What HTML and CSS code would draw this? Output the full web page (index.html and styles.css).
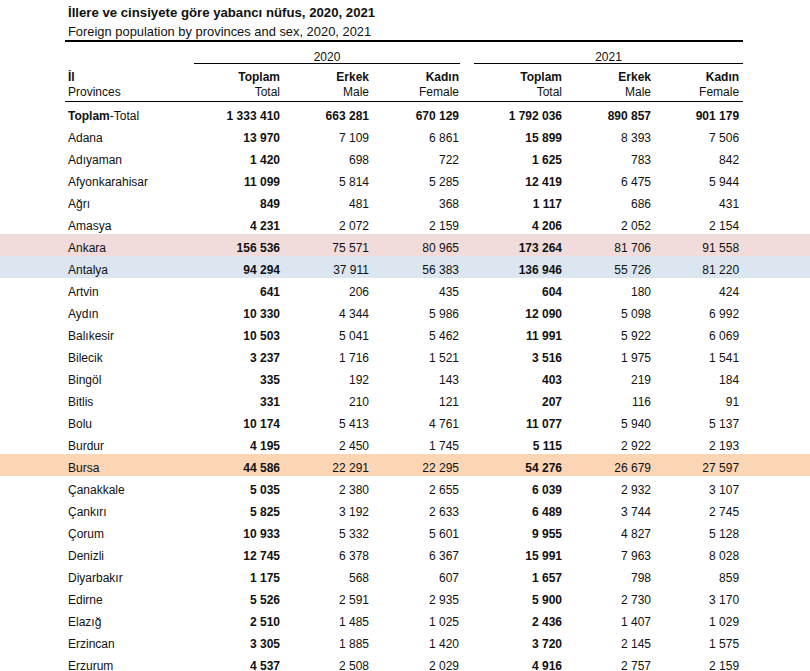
FILE: index.html
```html
<!DOCTYPE html>
<html lang="tr">
<head>
<meta charset="utf-8">
<title>İllere ve cinsiyete göre yabancı nüfus, 2020, 2021</title>
<link rel="stylesheet" href="styles.css">
</head>
<body>
<header class="caption">
  <h1 class="title">İllere ve cinsiyete göre yabancı nüfus, 2020, 2021</h1>
  <p class="subtitle">Foreign population by provinces and sex, 2020, 2021</p>
</header>
<table class="stats">
  <colgroup>
    <col class="c-pad-l"><col class="c-name"><col class="c-1"><col class="c-2"><col class="c-3"><col class="c-gap"><col class="c-4"><col class="c-5"><col class="c-6"><col class="c-pad-r">
  </colgroup>
  <thead>
    <tr class="year-row">
      <th class="pad"></th>
      <th class="ruled"></th>
      <th class="ruled year" colspan="3">2020</th>
      <th class="ruled"></th>
      <th class="ruled year" colspan="3">2021</th>
      <th class="pad"></th>
    </tr>
    <tr class="head-row">
      <th class="pad"></th>
      <th class="name"><b>İl</b><br>Provinces</th>
      <th class="num"><b>Toplam</b><br>Total</th>
      <th class="num"><b>Erkek</b><br>Male</th>
      <th class="num c3"><b>Kadın</b><br>Female</th>
      <th></th>
      <th class="num"><b>Toplam</b><br>Total</th>
      <th class="num"><b>Erkek</b><br>Male</th>
      <th class="num c6"><b>Kadın</b><br>Female</th>
      <th class="pad"></th>
    </tr>
  </thead>
  <tbody>
    <tr class="total">
      <td class="pad"></td><td class="name"><b>Toplam</b>-Total</td>
      <td class="num">1 333 410</td><td class="num">663 281</td><td class="num c3">670 129</td><td></td>
      <td class="num">1 792 036</td><td class="num">890 857</td><td class="num c6">901 179</td><td class="pad"></td>
    </tr>
    <tr><td class="pad"></td><td class="name">Adana</td><td class="num b">13 970</td><td class="num">7 109</td><td class="num c3">6 861</td><td></td><td class="num b">15 899</td><td class="num">8 393</td><td class="num c6">7 506</td><td class="pad"></td></tr>
    <tr><td class="pad"></td><td class="name">Adıyaman</td><td class="num b">1 420</td><td class="num">698</td><td class="num c3">722</td><td></td><td class="num b">1 625</td><td class="num">783</td><td class="num c6">842</td><td class="pad"></td></tr>
    <tr><td class="pad"></td><td class="name">Afyonkarahisar</td><td class="num b">11 099</td><td class="num">5 814</td><td class="num c3">5 285</td><td></td><td class="num b">12 419</td><td class="num">6 475</td><td class="num c6">5 944</td><td class="pad"></td></tr>
    <tr><td class="pad"></td><td class="name">Ağrı</td><td class="num b">849</td><td class="num">481</td><td class="num c3">368</td><td></td><td class="num b">1 117</td><td class="num">686</td><td class="num c6">431</td><td class="pad"></td></tr>
    <tr><td class="pad"></td><td class="name">Amasya</td><td class="num b">4 231</td><td class="num">2 072</td><td class="num c3">2 159</td><td></td><td class="num b">4 206</td><td class="num">2 052</td><td class="num c6">2 154</td><td class="pad"></td></tr>
    <tr class="hl-pink"><td class="pad"></td><td class="name">Ankara</td><td class="num b">156 536</td><td class="num">75 571</td><td class="num c3">80 965</td><td></td><td class="num b">173 264</td><td class="num">81 706</td><td class="num c6">91 558</td><td class="pad"></td></tr>
    <tr class="hl-blue"><td class="pad"></td><td class="name">Antalya</td><td class="num b">94 294</td><td class="num">37 911</td><td class="num c3">56 383</td><td></td><td class="num b">136 946</td><td class="num">55 726</td><td class="num c6">81 220</td><td class="pad"></td></tr>
    <tr><td class="pad"></td><td class="name">Artvin</td><td class="num b">641</td><td class="num">206</td><td class="num c3">435</td><td></td><td class="num b">604</td><td class="num">180</td><td class="num c6">424</td><td class="pad"></td></tr>
    <tr><td class="pad"></td><td class="name">Aydın</td><td class="num b">10 330</td><td class="num">4 344</td><td class="num c3">5 986</td><td></td><td class="num b">12 090</td><td class="num">5 098</td><td class="num c6">6 992</td><td class="pad"></td></tr>
    <tr><td class="pad"></td><td class="name">Balıkesir</td><td class="num b">10 503</td><td class="num">5 041</td><td class="num c3">5 462</td><td></td><td class="num b">11 991</td><td class="num">5 922</td><td class="num c6">6 069</td><td class="pad"></td></tr>
    <tr><td class="pad"></td><td class="name">Bilecik</td><td class="num b">3 237</td><td class="num">1 716</td><td class="num c3">1 521</td><td></td><td class="num b">3 516</td><td class="num">1 975</td><td class="num c6">1 541</td><td class="pad"></td></tr>
    <tr><td class="pad"></td><td class="name">Bingöl</td><td class="num b">335</td><td class="num">192</td><td class="num c3">143</td><td></td><td class="num b">403</td><td class="num">219</td><td class="num c6">184</td><td class="pad"></td></tr>
    <tr><td class="pad"></td><td class="name">Bitlis</td><td class="num b">331</td><td class="num">210</td><td class="num c3">121</td><td></td><td class="num b">207</td><td class="num">116</td><td class="num c6">91</td><td class="pad"></td></tr>
    <tr><td class="pad"></td><td class="name">Bolu</td><td class="num b">10 174</td><td class="num">5 413</td><td class="num c3">4 761</td><td></td><td class="num b">11 077</td><td class="num">5 940</td><td class="num c6">5 137</td><td class="pad"></td></tr>
    <tr><td class="pad"></td><td class="name">Burdur</td><td class="num b">4 195</td><td class="num">2 450</td><td class="num c3">1 745</td><td></td><td class="num b">5 115</td><td class="num">2 922</td><td class="num c6">2 193</td><td class="pad"></td></tr>
    <tr class="hl-orange"><td class="pad"></td><td class="name">Bursa</td><td class="num b">44 586</td><td class="num">22 291</td><td class="num c3">22 295</td><td></td><td class="num b">54 276</td><td class="num">26 679</td><td class="num c6">27 597</td><td class="pad"></td></tr>
    <tr><td class="pad"></td><td class="name">Çanakkale</td><td class="num b">5 035</td><td class="num">2 380</td><td class="num c3">2 655</td><td></td><td class="num b">6 039</td><td class="num">2 932</td><td class="num c6">3 107</td><td class="pad"></td></tr>
    <tr><td class="pad"></td><td class="name">Çankırı</td><td class="num b">5 825</td><td class="num">3 192</td><td class="num c3">2 633</td><td></td><td class="num b">6 489</td><td class="num">3 744</td><td class="num c6">2 745</td><td class="pad"></td></tr>
    <tr><td class="pad"></td><td class="name">Çorum</td><td class="num b">10 933</td><td class="num">5 332</td><td class="num c3">5 601</td><td></td><td class="num b">9 955</td><td class="num">4 827</td><td class="num c6">5 128</td><td class="pad"></td></tr>
    <tr><td class="pad"></td><td class="name">Denizli</td><td class="num b">12 745</td><td class="num">6 378</td><td class="num c3">6 367</td><td></td><td class="num b">15 991</td><td class="num">7 963</td><td class="num c6">8 028</td><td class="pad"></td></tr>
    <tr><td class="pad"></td><td class="name">Diyarbakır</td><td class="num b">1 175</td><td class="num">568</td><td class="num c3">607</td><td></td><td class="num b">1 657</td><td class="num">798</td><td class="num c6">859</td><td class="pad"></td></tr>
    <tr><td class="pad"></td><td class="name">Edirne</td><td class="num b">5 526</td><td class="num">2 591</td><td class="num c3">2 935</td><td></td><td class="num b">5 900</td><td class="num">2 730</td><td class="num c6">3 170</td><td class="pad"></td></tr>
    <tr><td class="pad"></td><td class="name">Elazığ</td><td class="num b">2 510</td><td class="num">1 485</td><td class="num c3">1 025</td><td></td><td class="num b">2 436</td><td class="num">1 407</td><td class="num c6">1 029</td><td class="pad"></td></tr>
    <tr><td class="pad"></td><td class="name">Erzincan</td><td class="num b">3 305</td><td class="num">1 885</td><td class="num c3">1 420</td><td></td><td class="num b">3 720</td><td class="num">2 145</td><td class="num c6">1 575</td><td class="pad"></td></tr>
    <tr><td class="pad"></td><td class="name">Erzurum</td><td class="num b">4 537</td><td class="num">2 508</td><td class="num c3">2 029</td><td></td><td class="num b">4 916</td><td class="num">2 757</td><td class="num c6">2 159</td><td class="pad"></td></tr>
  </tbody>
</table>
</body>
</html>
```

FILE: styles.css
```css
html, body {
  margin: 0;
  padding: 0;
  background: #ffffff;
  overflow: hidden;
}

body {
  font-family: "Liberation Sans", Arial, sans-serif;
  font-size: 12px;
  color: #111111;
}

.caption {
  height: 40px;
  padding-left: 68px;
  box-sizing: border-box;
}

.title {
  margin: 0;
  padding-top: 5px;
  font-size: 13.2px;
  font-weight: bold;
  line-height: 16px;
  color: #111111;
}

.subtitle {
  margin: 0;
  padding-top: 3px;
  font-size: 12.9px;
  line-height: 16px;
}

.stats {
  width: 810px;
  table-layout: fixed;
  border-collapse: separate;
  border-spacing: 0;
}

.c-pad-l { width: 65px; }
.c-name { width: 129px; }
.c-1 { width: 86px; }
.c-2 { width: 89px; }
.c-3 { width: 91px; }
.c-gap { width: 14px; }
.c-4 { width: 88px; }
.c-5 { width: 89px; }
.c-6 { width: 92px; }
.c-pad-r { width: 67px; }

.stats th,
.stats td {
  padding: 0;
  font-weight: normal;
  white-space: nowrap;
}

.year-row th {
  padding-top: 9px;
  line-height: 12px;
  vertical-align: top;
}

.year-row th.ruled {
  border-top: 2px solid #000000;
}

.year-row th.year {
  text-align: center;
  border-bottom: 1px solid #000000;
}

.head-row th {
  padding: 6px 0 1px;
  line-height: 15px;
  vertical-align: top;
  border-bottom: 1px solid #000000;
}

.head-row th.pad {
  border-bottom: none;
}

.stats td {
  padding-top: 6px;
  line-height: 16px;
  vertical-align: top;
}

.stats .name {
  text-align: left;
  padding-left: 3px;
}

.stats .num {
  text-align: right;
}

.stats .c3 {
  padding-right: 1px;
}

.stats .c6 {
  padding-right: 4px;
}

.stats .b,
.total td {
  font-weight: bold;
}

.total td.name {
  font-weight: normal;
}

.hl-pink td { background: #f2dcdb; }
.hl-blue td { background: #dce6f1; }
.hl-orange td { background: #fcd5b4; }
```
